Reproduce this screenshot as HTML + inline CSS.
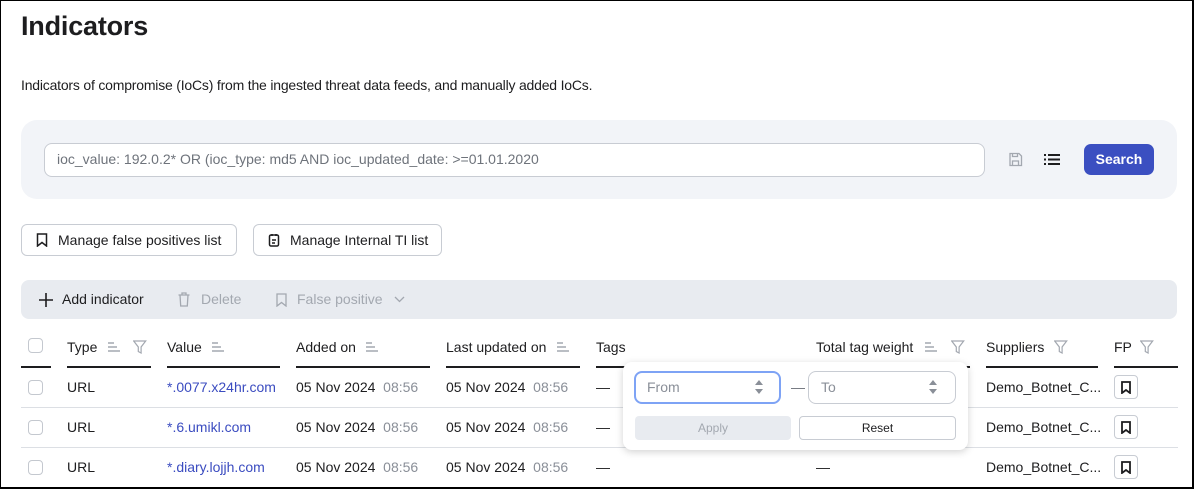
<!DOCTYPE html>
<html><head><meta charset="utf-8"><style>
*{box-sizing:border-box;margin:0;padding:0}
body{width:1194px;height:489px;overflow:hidden;background:#fff;font-family:"Liberation Sans",sans-serif;color:#1d1d1f;position:relative}
.frame{position:absolute;left:0;top:0;width:1194px;height:489px;border:1px solid #000;border-right-width:2px;border-bottom-width:2px;pointer-events:none;z-index:10}
.a{position:absolute;white-space:nowrap}
h1{position:absolute;left:21px;top:11px;font-size:27px;font-weight:bold;letter-spacing:-0.2px}
.btn{position:absolute;border:1px solid #c8ccd3;border-radius:6px;height:32px;font-size:14px;display:flex;align-items:center;background:#fff}
.hd{position:absolute;top:339px;font-size:14px}
.ul{position:absolute;top:366px;height:2px;background:#1d1d1f}
.row{position:absolute;left:21px;width:1157px;height:1px;background:#dcdfe4}
.cb{position:absolute;left:28px;width:15px;height:15px;border:1px solid #c4c8cf;border-radius:4px;background:#fff}
.c{position:absolute;font-size:14px}
.g{color:#8a8f98}
.lnk{color:#3b4cc0}
.fp{position:absolute;left:1114px;width:24px;height:24px;border:1px solid #c8ccd3;border-radius:4px;display:flex;align-items:center;justify-content:center}
</style></head><body>
<div class="frame"></div>
<h1>Indicators</h1>
<div class="a" style="left:21px;top:77px;font-size:14px;letter-spacing:-0.2px">Indicators of compromise (IoCs) from the ingested threat data feeds, and manually added IoCs.</div>
<div class="a" style="left:21px;top:120px;width:1156px;height:79px;background:#f2f4f8;border-radius:16px"></div>
<div class="a" style="left:44px;top:143px;width:941px;height:34px;background:#fff;border:1px solid #c8ccd3;border-radius:8px;font-size:14px;color:#6e737b;padding:7px 0 0 12px">ioc_value: 192.0.2* OR (ioc_type: md5 AND ioc_updated_date: &gt;=01.01.2020</div>
<svg class="a" style="left:1008px;top:152px" width="15" height="15" viewBox="0 0 15 15" fill="none" stroke="#a3a8b0" stroke-width="1.3"><path d="M2 1.5h9l2.5 2.5v9.5h-11.5z"/><path d="M4.5 1.5v3h5v-3M4.5 13.5v-4.5h6v4.5"/></svg>
<svg class="a" style="left:1044px;top:153px" width="16" height="13" viewBox="0 0 16 13" fill="#1d1d1f"><rect x="0" y="1" width="2" height="2"/><rect x="4" y="1" width="12" height="2"/><rect x="0" y="5.5" width="2" height="2"/><rect x="4" y="5.5" width="12" height="2"/><rect x="0" y="10" width="2" height="2"/><rect x="4" y="10" width="12" height="2"/></svg>
<div class="a" style="left:1084px;top:144px;width:70px;height:31px;background:#3b4fc1;border-radius:7px;color:#fff;font-size:14px;font-weight:bold;text-align:center;line-height:31px">Search</div>
<div class="btn" style="left:21px;top:224px;width:216px"><svg style="margin:0 10px 0 14px" width="12" height="14" viewBox="0 0 12 14" fill="none" stroke="#1d1d1f" stroke-width="1.5"><path d="M1.5 1h9v12l-4.5-3.5-4.5 3.5z"/></svg>Manage false positives list</div>
<div class="btn" style="left:253px;top:224px;width:189px"><svg style="margin:0 10px 0 14px" width="12" height="14" viewBox="0 0 12 14" fill="none" stroke="#1d1d1f" stroke-width="1.5"><rect x="1.5" y="2" width="9" height="11" rx="1.5"/><path d="M4 1v2M8 1v2M4 7h4M4 10h3"/></svg>Manage Internal TI list</div>
<div class="a" style="left:21px;top:280px;width:1156px;height:39px;background:#e8ebf0;border-radius:8px"></div>
<svg class="a" style="left:39px;top:293px" width="14" height="14" viewBox="0 0 14 14" stroke="#1d1d1f" stroke-width="1.6"><path d="M7 0v14M0 7h14"/></svg>
<div class="a" style="left:62px;top:291px;font-size:14px">Add indicator</div>
<svg class="a" style="left:178px;top:292px" width="12" height="15" viewBox="0 0 12 15" fill="none" stroke="#a3a8b0" stroke-width="1.3"><path d="M0.5 3h11M4 3V1h4v2M2 3l.7 11h6.6L10 3"/></svg>
<div class="a g" style="left:201px;top:291px;font-size:14px;color:#a3a8b0">Delete</div>
<svg class="a" style="left:276px;top:293px" width="11" height="14" viewBox="0 0 11 14" fill="none" stroke="#a3a8b0" stroke-width="1.3"><path d="M1 1h9v12l-4.5-3.5-4.5 3.5z"/></svg>
<div class="a" style="left:297px;top:291px;font-size:14px;color:#a3a8b0">False positive</div>
<svg class="a" style="left:394px;top:296px" width="11" height="7" viewBox="0 0 11 7" fill="none" stroke="#a3a8b0" stroke-width="1.3"><path d="M1 1l4.5 4.5L10 1"/></svg>

<div class="cb" style="top:338px"></div>
<div class="hd" style="left:67px">Type</div>
<div class="hd" style="left:167px">Value</div>
<div class="hd" style="left:296px">Added on</div>
<div class="hd" style="left:446px">Last updated on</div>
<div class="hd" style="left:596px">Tags</div>
<div class="hd" style="left:816px">Total tag weight</div>
<div class="hd" style="left:986px">Suppliers</div>
<div class="hd" style="left:1114px">FP</div>
<svg width="0" height="0" style="position:absolute"><defs>
<g id="s"><path d="M0 1h6M0 5h9M0 9h12" stroke="#a3a8b0" stroke-width="1.4"/></g>
<g id="f"><path d="M0.7 1h12l-4.6 6v6l-2.8-1.5v-4.5z" fill="none" stroke="#a3a8b0" stroke-width="1.2"/></g></defs></svg>
<svg class="a" style="left:108px;top:342px" width="12" height="11"><use href="#s"/></svg>
<svg class="a" style="left:133px;top:340px" width="14" height="14"><use href="#f"/></svg>
<svg class="a" style="left:212px;top:342px" width="12" height="11"><use href="#s"/></svg>
<svg class="a" style="left:366px;top:342px" width="12" height="11"><use href="#s"/></svg>
<svg class="a" style="left:557px;top:342px" width="12" height="11"><use href="#s"/></svg>
<svg class="a" style="left:925px;top:342px" width="12" height="11"><use href="#s"/></svg>
<svg class="a" style="left:951px;top:340px" width="14" height="14"><use href="#f"/></svg>
<svg class="a" style="left:1054px;top:340px" width="14" height="14"><use href="#f"/></svg>
<svg class="a" style="left:1140px;top:340px" width="14" height="14"><use href="#f"/></svg>
<div class="ul" style="left:21px;width:30px"></div>
<div class="ul" style="left:67px;width:84px"></div>
<div class="ul" style="left:167px;width:113px"></div>
<div class="ul" style="left:296px;width:134px"></div>
<div class="ul" style="left:446px;width:134px"></div>
<div class="ul" style="left:596px;width:374px"></div>
<div class="ul" style="left:986px;width:112px"></div>
<div class="ul" style="left:1114px;width:64px"></div>

<div class="row" style="top:407px"></div>
<div class="row" style="top:447px"></div>
<div class="row" style="top:487px"></div>

<div class="cb" style="top:380px"></div><div class="cb" style="top:420px"></div><div class="cb" style="top:460px"></div>
<div class="c" style="left:67px;top:379px">URL</div><div class="c" style="left:67px;top:419px">URL</div><div class="c" style="left:67px;top:459px">URL</div>
<div class="c lnk" style="left:167px;top:379px">*.0077.x24hr.com</div>
<div class="c lnk" style="left:167px;top:419px">*.6.umikl.com</div>
<div class="c lnk" style="left:167px;top:459px">*.diary.lojjh.com</div>
<div class="c" style="left:296px;top:379px">05 Nov 2024 <span class="g">&nbsp;08:56</span></div>
<div class="c" style="left:296px;top:419px">05 Nov 2024 <span class="g">&nbsp;08:56</span></div>
<div class="c" style="left:296px;top:459px">05 Nov 2024 <span class="g">&nbsp;08:56</span></div>
<div class="c" style="left:446px;top:379px">05 Nov 2024 <span class="g">&nbsp;08:56</span></div>
<div class="c" style="left:446px;top:419px">05 Nov 2024 <span class="g">&nbsp;08:56</span></div>
<div class="c" style="left:446px;top:459px">05 Nov 2024 <span class="g">&nbsp;08:56</span></div>
<div class="c" style="left:596px;top:379px">—</div><div class="c" style="left:596px;top:419px">—</div><div class="c" style="left:596px;top:459px">—</div>
<div class="c" style="left:816px;top:459px">—</div>
<div class="c" style="left:986px;top:379px">Demo_Botnet_C...</div>
<div class="c" style="left:986px;top:419px">Demo_Botnet_C...</div>
<div class="c" style="left:986px;top:459px">Demo_Botnet_C...</div>
<svg width="0" height="0" style="position:absolute"><defs><path id="bm" d="M1 1h8v11l-4-3-4 3z" fill="none" stroke="#1d1d1f" stroke-width="1.8"/></defs></svg>
<div class="fp" style="top:375px"><svg width="10" height="13"><use href="#bm"/></svg></div>
<div class="fp" style="top:415px"><svg width="10" height="13"><use href="#bm"/></svg></div>
<div class="fp" style="top:455px"><svg width="10" height="13"><use href="#bm"/></svg></div>

<div class="a" style="left:623px;top:362px;width:345px;height:88px;background:#fff;border-radius:9px;box-shadow:0 2px 8px rgba(0,0,0,0.18);z-index:5">
<div class="a" style="left:11px;top:9px;width:147px;height:33px;border:2px solid #7ea3f5;border-radius:8px;font-size:14px;color:#8a8f98;padding:6px 0 0 11px">From</div>
<svg class="a" style="left:132px;top:18px" width="8" height="14" viewBox="0 0 8 14" fill="#8a8f98"><path d="M4 0l4 5H0zM4 14l4-5H0z"/></svg>
<div class="a" style="left:168px;top:17px;font-size:14px;color:#6e737b">—</div>
<div class="a" style="left:185px;top:9px;width:148px;height:33px;border:1px solid #c8ccd3;border-radius:8px;font-size:14px;color:#8a8f98;padding:7px 0 0 12px">To</div>
<svg class="a" style="left:306px;top:18px" width="8" height="14" viewBox="0 0 8 14" fill="#8a8f98"><path d="M4 0l4 5H0zM4 14l4-5H0z"/></svg>
<div class="a" style="left:12px;top:54px;width:156px;height:24px;background:#e8ebf0;border-radius:4px;font-size:12px;color:#a3a8b0;text-align:center;line-height:24px">Apply</div>
<div class="a" style="left:176px;top:54px;width:157px;height:24px;border:1px solid #c8ccd3;border-radius:4px;font-size:12px;text-align:center;line-height:22px">Reset</div>
</div>
</body></html>
